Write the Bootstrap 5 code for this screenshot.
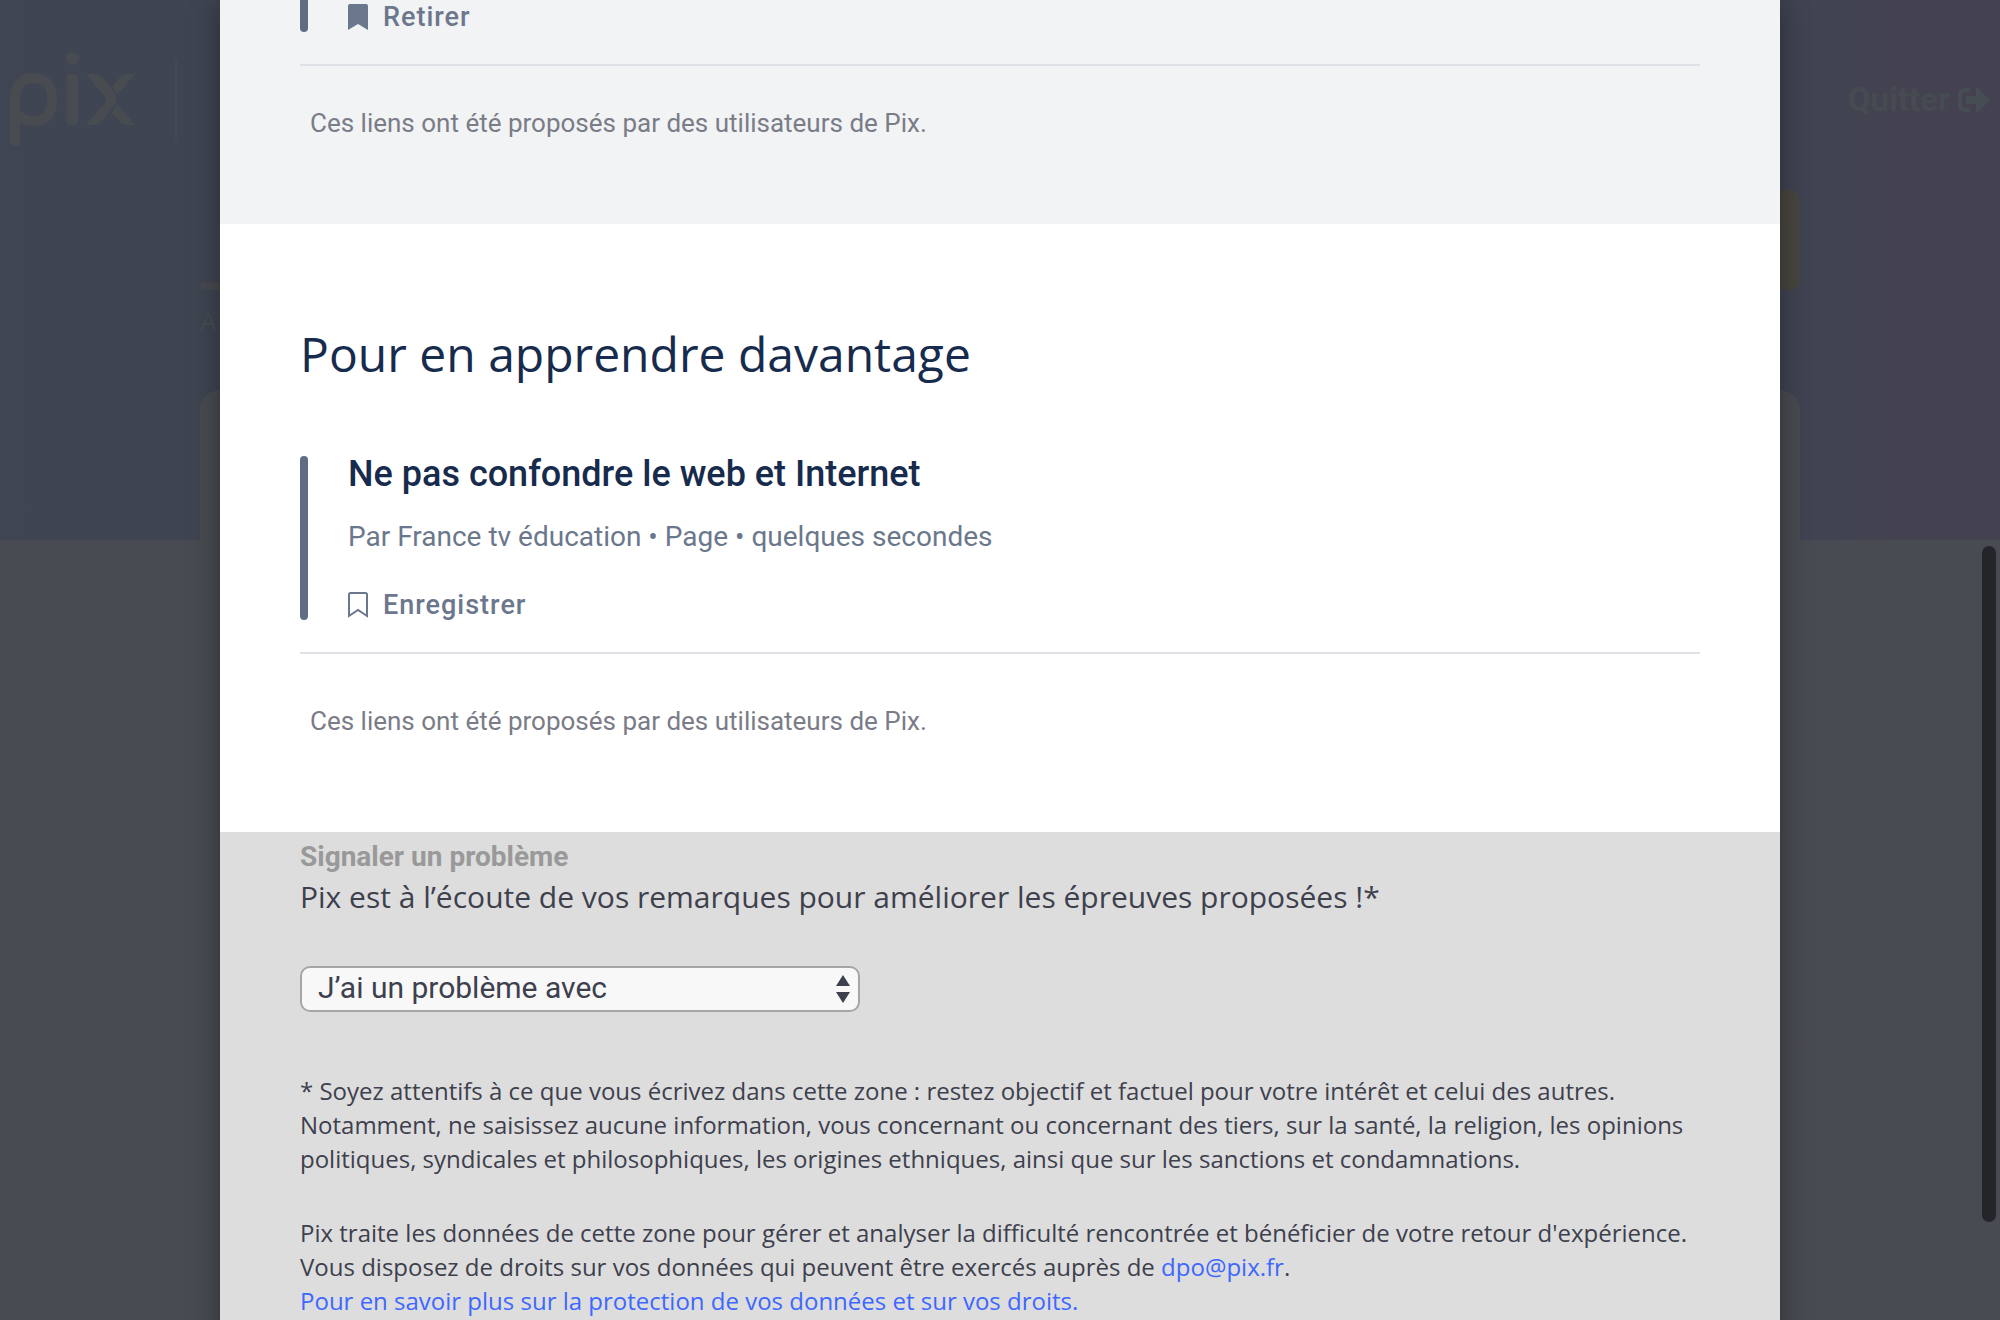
<!DOCTYPE html>
<html lang="fr">
<head>
<meta charset="utf-8">
<meta name="viewport" content="width=device-width, initial-scale=1">
<title>Pix</title>
<link href="https://cdn.jsdelivr.net/npm/bootstrap@5.3.0/dist/css/bootstrap.min.css" rel="stylesheet">
<style>
  body { font-family: "Open Sans", sans-serif; background: #484b52; color: #3d404d; height: 100vh; overflow: hidden; }
  .roboto { font-family: Roboto, sans-serif; }

  /* page behind the dialog */
  .hero { height: 540px; background: linear-gradient(90deg, #3f4552 0%, #3f4451 20%, #404452 90%, #444251 95%, #444150 100%); }
  .topbar { height: 200px; padding: 0 10px; }
  .brand-divider { width: 2px; height: 80px; background: #464a52; margin-left: 40px; }
  .quit { font-size: 33px; line-height: 40px; color: #464b52; gap: 8px; }
  .quit:hover { color: #464b52; }
  .backdrop-column { max-width: 1600px; padding-top: 390px; }
  .steps { top: 282px; left: 0; color: #484b51; font-size: 26px; line-height: 30px; }
  .steps-line { width: 120px; height: 8px; background: #484850; border-radius: 4px; margin-bottom: 16px; }
  .resume { top: 190px; right: 0; width: 200px; height: 100px; border-radius: 10px; background: #48463f; }
  .panel { height: 672px; border-radius: 20px; background: #484b50; }

  /* dialog */
  .sheet { max-width: 1560px; box-shadow: 0 0 28px rgba(0, 0, 0, .38); }
  .sheet section { padding-left: 80px; padding-right: 80px; }
  .saved { background: #f2f3f5; padding-bottom: 86px; }
  .learn { padding-top: 98px; padding-bottom: 96px; }
  .learn h2 { font-size: 48px; line-height: 64px; color: #172b4d; margin-bottom: 70px; }
  .tutorial { border-bottom: 2px solid #dfe1e6; padding-bottom: 32px; gap: 40px; }
  .tutorial-bar { width: 8px; border-radius: 4px; background: #5e6c84; }
  .saved .tutorial-bar { border-radius: 0 0 4px 4px; }
  .saved .save { margin-top: 2px; }
  .learn .save { margin-top: 35px; }
  .tutorial h3 { font-size: 36px; line-height: 36px; color: #172b4d; font-weight: 500; margin-bottom: 27px; }
  .details { font-size: 28px; line-height: 36px; color: #6b778c; }
  .save { font-size: 27px; line-height: 30px; font-weight: 500; letter-spacing: 1px; color: #6b778c; gap: 15px; }
  .note { font-size: 26px; line-height: 30px; color: #7a7c87; padding-left: 10px; }
  .saved .note { margin-top: 42px; }
  .learn .note { margin-top: 52px; }
  .report { background: #ddd; padding-top: 9px; padding-bottom: 80px; font-size: 24px; line-height: 34px; }
  .report h2 { font-size: 28px; line-height: 32px; font-weight: 700; color: #999; margin-bottom: 2px; }
  .report label { font-size: 30px; line-height: 44px; margin-bottom: 47px; }
  .picker { width: 560px; max-width: 100%; }
  .picker select { appearance: none; height: 46px; font-size: 30px; line-height: 36px; padding: 0 56px 2px 16px; border: 2px solid #a6a6a6; border-radius: 10px; background: #f8f8f8; color: #3d404d; }
  .picker svg { top: 9px; right: 10px; pointer-events: none; }
  .legal { margin-top: 62px; }
  .legal p { margin-bottom: 40px; }
  .legal a { color: #3d68ff; text-decoration: none; }
  .scroll-thumb { right: 4px; top: 546px; width: 14px; height: 676px; border-radius: 7px; background: #242529; }
</style>
<script src="https://cdn.jsdelivr.net/npm/bootstrap@5.3.0/dist/js/bootstrap.bundle.min.js"></script>
</head>
<body class="position-relative">

<div class="hero" aria-hidden="true">
  <header class="topbar d-flex align-items-center justify-content-between">
    <div class="d-flex align-items-center">
      <svg width="125" height="96" viewBox="0 0 125 96" fill="#484c51">
        <path d="M5 91V46c0-13 7-20 18.500-20S42 33 42 46v3c0 13-7 20-18.500 20S5 64 5 54" fill="none" stroke="#484c51" stroke-width="10"/>
        <path d="M0 88h10v3q0 3-3 3H3q-3 0-3-3z"/>
        <rect x="57" y="22" width="11" height="51" rx="3"/>
        <circle cx="62.500" cy="6.500" r="6.500"/>
        <path d="M77 22h8q4 0 7 3l12 15q5 7 0 14L91 70q-2 3-6 3h-8l-.500-1L95 51q2-3 0-6L76.500 23zM124 22h-8q-4 0-6 3l-8 10 5 8 17.500-20zM124 73h-8q-4 0-6-3l-8-9 5-9 17.500 20z"/>
      </svg>
      <div class="brand-divider"></div>
    </div>
    <a class="quit roboto d-flex align-items-center fw-bold text-decoration-none" href="#" tabindex="-1">Quitter
      <svg width="32" height="24" viewBox="0 0 32 24"><path d="M10.500 2H7Q2 2 2 7v10q0 5 5 5h3.500" fill="none" stroke="#464e54" stroke-width="4" stroke-linecap="round"/><path d="M9 8h9V1q1-2 3 0l11 11-11 11q-2 2-3 0v-7H9q-1 0-1-1V9q0-1 1-1z" fill="#464e54"/></svg>
    </a>
  </header>
</div>

<!-- activity page seen around the dialog -->
<div class="position-absolute top-0 start-0 w-100" aria-hidden="true">
  <div class="backdrop-column position-relative mx-auto">
    <div class="steps position-absolute"><div class="steps-line"></div>AV</div>
    <div class="resume position-absolute"></div>
    <div class="panel"></div>
  </div>
</div>

<div class="position-absolute top-0 start-0 w-100">
  <main class="sheet mx-auto bg-white" role="dialog" aria-label="Tutoriels">
    <section class="saved">
      <div class="tutorial d-flex">
        <div class="tutorial-bar"></div>
        <button type="button" class="save roboto border-0 bg-transparent p-0 d-flex align-items-center" aria-pressed="true">
          <svg width="20" height="26" viewBox="0 0 20 26" fill="#6b778c"><path d="M2 0h16q2 0 2 2v24l-10-6-10 6V2q0-2 2-2z"/></svg>
          Retirer
        </button>
      </div>
      <p class="note roboto mb-0">Ces liens ont été proposés par des utilisateurs de Pix.</p>
    </section>

    <section class="learn">
      <h2 class="fw-normal">Pour en apprendre davantage</h2>
      <div class="tutorial d-flex">
        <div class="tutorial-bar"></div>
        <div class="roboto">
          <h3>Ne pas confondre le web et Internet</h3>
          <p class="details mb-0">Par France tv éducation • Page • quelques secondes</p>
          <button type="button" class="save roboto border-0 bg-transparent p-0 d-flex align-items-center">
            <svg width="20" height="26" viewBox="0 0 20 26" fill="none" stroke="#6b778c" stroke-width="2"><path d="M2.500 1h15Q19 1 19 2.500v21.500l-9-6-9 6V2.500Q1 1 2.500 1z"/></svg>
            Enregistrer
          </button>
        </div>
      </div>
      <p class="note roboto mb-0">Ces liens ont été proposés par des utilisateurs de Pix.</p>
    </section>

    <section class="report">
      <h2 class="roboto">Signaler un problème</h2>
      <label class="d-block" for="problem">Pix est à l’écoute de vos remarques pour améliorer les épreuves proposées !*</label>
      <div class="picker position-relative">
        <select id="problem" class="roboto d-block w-100">
          <option>J’ai un problème avec</option>
        </select>
        <svg class="position-absolute" width="14" height="28" viewBox="0 0 14 28" fill="#3d404d"><path d="M0 11 7 0l7 11zM0 17h14L7 28z"/></svg>
      </div>
      <div class="legal">
        <p>* Soyez attentifs à ce que vous écrivez dans cette zone : restez objectif et factuel pour votre intérêt et celui des autres. Notamment, ne saisissez aucune information, vous concernant ou concernant des tiers, sur la santé, la religion, les opinions politiques, syndicales et philosophiques, les origines ethniques, ainsi que sur les sanctions et condamnations.</p>
        <p>Pix traite les données de cette zone pour gérer et analyser la difficulté rencontrée et bénéficier de votre retour d'expérience.<br>
          Vous disposez de droits sur vos données qui peuvent être exercés auprès de <a href="mailto:dpo@pix.fr">dpo@pix.fr</a>.<br>
          <a href="#">Pour en savoir plus sur la protection de vos données et sur vos droits.</a></p>
      </div>
    </section>
  </main>
</div>

<div class="scroll-thumb position-absolute"></div>
</body>
</html>
